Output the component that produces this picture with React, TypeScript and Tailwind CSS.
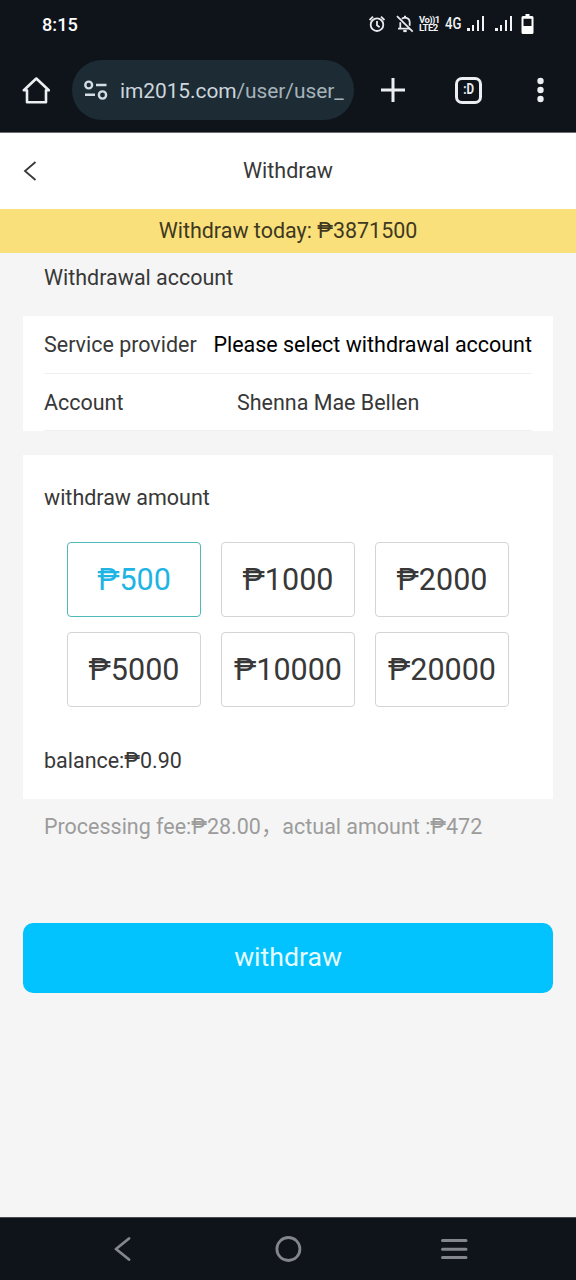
import { clsx } from "clsx";

const amounts = [500, 1000, 2000, 5000, 10000, 20000];

const SignalIcon = () => (
  <svg width="18" height="16" viewBox="0 0 18 16" fill="#f1f3f4" shapeRendering="crispEdges">
    <rect x="0" y="12" width="3" height="3" />
    <rect x="5" y="9" width="2" height="6" />
    <rect x="10" y="4" width="2" height="11" />
    <rect x="15" y="0" width="2" height="15" />
  </svg>
);

const StatusBar = () => (
  <div className="flex h-12 items-center pl-[42px] pr-[42px] text-[#f1f3f4]">
    <span className="pt-0.5 text-[18.2px] leading-none font-medium text-white">8:15</span>
    <div className="ml-auto flex items-center">
      {/* Alarm */}
      <svg width="16" height="18" viewBox="0 0 16 18" fill="none" stroke="#e8eaed" strokeWidth="1.8">
        <circle cx="8" cy="9.7" r="6.3" />
        <path d="M8 6v4.2l2.6 2" />
        <path d="M.6 5 4 1.6M15.400 5 12 1.600" />
      </svg>
      {/* Muted bell */}
      <svg className="ml-[11px]" width="18" height="18" viewBox="0 0 18 18" fill="none" stroke="#e8eaed" strokeWidth="1.8">
        <path d="M4.3 7.2v6.2M2 13.7h12M13.7 10.7V7.5c0-2.3-1.7-4.2-3.4-4.6h-2.6c-.7.2-1.3.5-1.8 1" />
        <path d="M9 .7v2" strokeWidth="2" />
        <path d="M7.3 16h3.4" strokeWidth="2.2" />
        <path d="M1 1.2 16.7 16.7" />
      </svg>
      <div className="ml-[5px] flex w-[21px] flex-col text-[9.5px] leading-[8.5px] font-bold">
        <span className="whitespace-nowrap tracking-[-0.6px]">Vo))1</span>
        <span className="whitespace-nowrap tracking-[-0.5px]">LTE2</span>
      </div>
      <span className="ml-[5px] w-[17px] origin-left scale-x-[0.82] text-[16px] leading-none font-medium">4G</span>
      <div className="ml-[5px] flex gap-[10px]">
        <SignalIcon />
        <SignalIcon />
      </div>
      <svg className="ml-[8px]" width="13" height="20" viewBox="0 0 13 20">
        <path fill="#fff" fillRule="evenodd" d="M4.5 0h4v2H11q1.5 0 1.5 1.5v15Q12.500 20 11 20H2Q.5 20 .5 18.500v-15Q.5 2 2 2h2.500zM2.500 4.700v7.300h8V4.700z" />
      </svg>
    </div>
  </div>
);

const BrowserBar = () => (
  <div className="flex h-[85px] items-center border-b border-[#6b6e70] pl-[22px]">
    <svg className="mb-px" width="28" height="28" viewBox="0 0 28 28" fill="none" stroke="#eceff1" strokeWidth="2.6" strokeLinejoin="round">
      <path d="M1.800 14.300 14.300 2.500 26.800 14.300H24V26.300H5V14.300z" />
    </svg>
    <div className="ml-[22px] flex h-[60px] w-[282px] items-center rounded-full bg-[#1c2b34] pl-3">
      <svg width="24" height="20" viewBox="0 0 24 20" fill="none" stroke="#d3dde3" strokeWidth="2.400">
        <circle cx="4.700" cy="5" r="3.400" />
        <path d="M12 5h10.500M1 14.800h10" />
        <circle cx="18.500" cy="15" r="3.600" />
      </svg>
      <span className="ml-3 pt-0.5 text-[20.900px] leading-none tracking-[-0.050px] text-[#ccd7dd]">
        im2015.com<span className="text-[#a6b3ba]">/user/user_</span>
      </span>
    </div>
    <svg className="ml-[27px]" width="24" height="24" viewBox="0 0 24 24" stroke="#eceff1" strokeWidth="3">
      <path d="M12 0v24M0 12h24" />
    </svg>
    <div className="ml-[50px] flex h-[27px] w-[27px] items-center justify-center rounded-[7px] border-[3px] border-[#eceff1] text-[14.500px] leading-none font-bold text-[#eceff1]">
      <span className="scale-x-[0.8]">:D</span>
    </div>
    <svg className="ml-[54px]" width="8" height="26" viewBox="0 0 8 26" fill="#eceff1">
      <circle cx="4.500" cy="4" r="3.200" />
      <circle cx="4.500" cy="13" r="3.200" />
      <circle cx="4.500" cy="22" r="3.200" />
    </svg>
  </div>
);

const NavBar = () => (
  <div className="flex h-[63px] items-center border-t border-[#4a4d51] bg-[#0f141b] pb-px pl-[114px]">
    <svg width="17" height="24" viewBox="0 0 17 24" fill="none" stroke="#83868c" strokeWidth="2.800" strokeLinecap="round" strokeLinejoin="round">
      <path d="M15 1.500 2 12 15 22.500" />
    </svg>
    <svg className="ml-[144px]" width="27" height="28" viewBox="0 0 27 28" fill="none" stroke="#83868c" strokeWidth="2.800">
      <circle cx="13.400" cy="14" r="11.500" />
    </svg>
    <svg className="ml-[139px]" width="27" height="24" viewBox="0 0 27 24" stroke="#83868c" strokeWidth="3" strokeLinecap="round">
      <path d="M1.500 3.500h23.500M1.500 12.300h23.500M1.500 20.500h23.500" />
    </svg>
  </div>
);

const App = () => {
  const selected = 500;

  return (
    <div className="flex h-[1280px] w-[576px] flex-col overflow-hidden bg-[#f5f5f5] font-[Roboto,'Noto_Sans_CJK_SC',sans-serif] text-[21.480px] text-[#383838]">
      <div className="bg-[#0f141b]">
        <StatusBar />
        <BrowserBar />
      </div>

      {/* Page header */}
      <header className="grid h-[76px] grid-cols-[1fr_auto_1fr] items-center bg-white pl-[23px] pr-[23px]">
        <svg width="14" height="20" viewBox="0 0 14 20" fill="none" stroke="#383838" strokeWidth="1.800">
          <path d="M12.500 1 2 10 12.500 19" />
        </svg>
        <h1 className="leading-none">Withdraw</h1>
      </header>

      <div className="flex h-[44px] items-center justify-center bg-[#f9e07b] text-[#40381f]">
        Withdraw today: ₱3871500
      </div>

      <main className="flex flex-1 flex-col px-[23px]">
        <h2 className="h-[63px] pt-[9px] pl-[21px] leading-8">Withdrawal account</h2>

        <section className="h-[115px] bg-white px-[21px]">
          <div className="flex h-[58px] items-center justify-between border-b border-[#f0f0f0] pt-0.5 whitespace-nowrap">
            <span>Service provider</span>
            <span className="text-black">Please select withdrawal account</span>
          </div>
          <div className="flex h-[57px] items-center border-b border-[#f0f0f0] pt-0.5">
            <span className="w-[193px]">Account</span>
            <span>Shenna Mae Bellen</span>
          </div>
        </section>

        <section className="mt-6 h-[344px] bg-white px-[21px] pt-[27px]">
          <h2 className="leading-8">withdraw amount</h2>
          <div className="mt-[28px] ml-[23px] grid w-[442px] grid-cols-3 gap-x-5 gap-y-[15px]">
            {amounts.map((amount) => (
              <button
                key={amount}
                className={clsx(
                  "h-[75px] rounded-[4px] border pt-0.5 text-[30.500px] leading-none",
                  amount === selected ? "border-[#4fb8b8] text-[#1eb4e4]" : "border-[#d4d4d4]"
                )}
              >
                ₱{amount}
              </button>
            ))}
          </div>
          <p className="mt-[38px] leading-8">balance:₱0.90</p>
        </section>

        <p className="mt-3 pl-[21px] leading-8 whitespace-nowrap text-[#9c9c9c]">
          Processing fee:₱28.00，actual amount :₱472
        </p>

        <button className="mt-20 h-[70px] rounded-[10px] bg-[#02c3fd] pb-[3px] text-[26.600px] text-[#e4fbff]">
          withdraw
        </button>
      </main>

      <NavBar />
    </div>
  );
};

export default App;
